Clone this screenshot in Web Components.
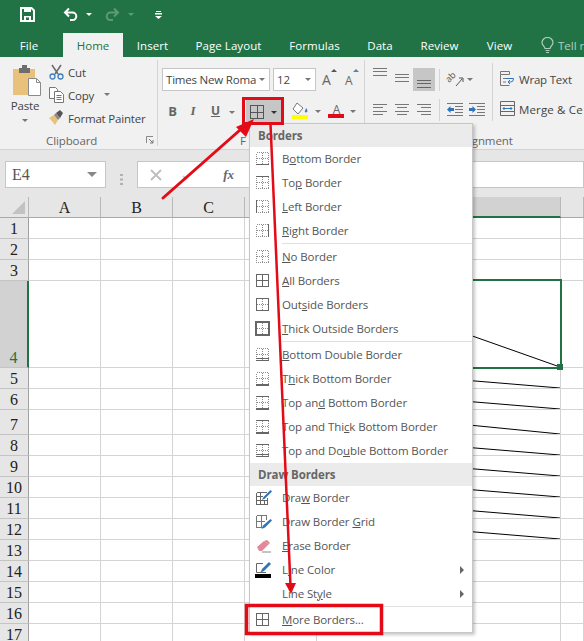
<!DOCTYPE html>
<html><head><meta charset="utf-8"><title>Excel borders</title>
<style>
html,body{margin:0;padding:0;background:#fff}
body{width:584px;height:641px;overflow:hidden;position:relative;font:11.5px "Open Sans",sans-serif;color:#444}
</style></head><body>
<x-titlebar></x-titlebar>
<x-tabbar></x-tabbar>
<x-ribbon>
  <x-clipboard-group></x-clipboard-group>
  <x-font-group></x-font-group>
  <x-alignment-group></x-alignment-group>
</x-ribbon>
<x-formula-bar></x-formula-bar>
<x-sheet></x-sheet>
<x-border-menu></x-border-menu>
<x-annotations></x-annotations>
<script>
function define(name, html, mixin){
  const t=document.createElement('template');t.innerHTML=html;
  customElements.define(name,class extends HTMLElement{
    constructor(){super();const r=this.attachShadow({mode:'open'});r.appendChild(t.content.cloneNode(true));if(mixin)mixin.call(this,r);}
  });
}
const FONT='"Open Sans",sans-serif';
const TXT=`font:11.5px ${FONT};letter-spacing:-.2px;`;

define('x-caret',`<style>:host{display:inline-block;flex:none;width:0;height:0;border-left:3px solid transparent;border-right:3px solid transparent;border-top:3px solid currentColor;color:#777}</style>`);

define('x-titlebar',`<style>
:host{display:flex;align-items:center;height:33px;background:#217346;color:#fff;box-sizing:border-box;padding:0 0 4px 20px}
svg{display:block}
x-caret{color:#fff;margin-left:8px}
.dim{color:#5d9a78}
</style>
<svg width="15" height="15" viewBox="0 0 15 15"><path d="M1 1h10.5L14 3.500V14H1z" fill="none" stroke="#fff" stroke-width="2"/><rect x="4" y="1" width="7" height="4" fill="#fff"/><rect x="4" y="9" width="7" height="5" fill="#fff"/><rect x="6" y="10.500" width="3" height="2.500" fill="#217346"/></svg>
<svg style="margin-left:28px" width="15" height="15" viewBox="0 0 15 15"><path d="M6 1.500L2 5.500l4 4M2 5.500h7.500a3.800 3.800 0 0 1 0 7.600H7" fill="none" stroke="#fff" stroke-width="2"/></svg>
<x-caret style="margin-left:8px"></x-caret>
<svg style="margin-left:13px" width="15" height="15" viewBox="0 0 15 15"><path d="M9 1.500l4 4-4 4M13 5.500H5.500a3.800 3.800 0 0 0 0 7.600H8" fill="none" stroke="#5d9a78" stroke-width="2"/></svg>
<x-caret class="dim" style="margin-left:8px"></x-caret>
<svg style="margin-left:21px" width="7" height="8" viewBox="0 0 7 8"><rect x="1" y="0" width="5" height="1" fill="#fff"/><rect x="0" y="2" width="7" height="1.500" fill="#fff"/><path d="M0 5h7L3.500 8z" fill="#fff"/></svg>
`);

define('x-tab',`<style>
:host{display:flex;align-items:center;justify-content:center;height:24px;box-sizing:border-box;color:#fff;font:11.5px ${FONT};letter-spacing:.05px;white-space:nowrap}
:host([active]){background:#f1f1f1;color:#217346}
</style><slot></slot>`);

define('x-tabbar',`<style>
:host{display:flex;height:24px;background:#217346;overflow:hidden}
x-tab{flex:none}
.tell{opacity:.8;display:flex;align-items:center;gap:4px;color:#d4e5db;font:11.5px ${FONT};margin-left:29px;white-space:nowrap}
</style>
<x-tab style="width:63px;padding-right:5px">File</x-tab>
<x-tab active style="width:60px">Home</x-tab>
<x-tab style="width:29px;margin-left:15px">Insert</x-tab>
<x-tab style="width:65px;margin-left:29px">Page Layout</x-tab>
<x-tab style="width:49px;margin-left:29px">Formulas</x-tab>
<x-tab style="width:24px;margin-left:29px">Data</x-tab>
<x-tab style="width:37px;margin-left:29px">Review</x-tab>
<x-tab style="width:25px;margin-left:29px">View</x-tab>
<div class="tell"><svg width="13" height="16" viewBox="0 0 13 16"><path d="M4 11.500C3.500 9 1 8.500 1 5.500a5.500 5 0 0 1 11 0c0 3-2.500 3.500-3 6zM4.500 13.500h4M5 15.500h3" fill="none" stroke="#d4e5db" stroke-width="1.200"/></svg><span>Tell r</span></div>
`);

define('x-ribbon',`<style>
:host{display:flex;height:92px;background:#f1f1f1;border-bottom:1px solid #d2d2d2;box-sizing:content-box;overflow:hidden}
</style><slot></slot>`);

define('x-group-label',`<style>
:host{display:block;height:14px;font:11.5px/14px ${FONT};color:#666;white-space:nowrap;margin-top:auto;letter-spacing:-.1px}
</style><slot></slot>`);

define('x-small-btn',`<style>
:host{display:flex;align-items:center;height:23px;${TXT}color:#444;white-space:nowrap}
.i{width:19px;flex:none;display:flex}
.t{padding-top:1px}
</style><div class="i"><slot name="icon"></slot></div><div class="t"><slot></slot></div><slot name="after"></slot>`);

define('x-clipboard-group',`<style>
:host{display:flex;flex-direction:column;flex:none;width:158px;box-sizing:border-box;height:86px;margin-top:3px;border-right:1px solid #d4d4d4;position:relative}
.body{display:flex;height:74px}
.paste{width:49px;flex:none;display:flex;flex-direction:column;${TXT}color:#444}
.paste svg{display:block;margin:5px 0 0 13px}
.paste span{display:block;text-align:center;width:50px;line-height:14px;margin-top:3px}
.paste x-caret{margin:6px 0 0 22px}
.foot{display:flex;align-items:center;height:12px;margin-top:auto}
x-group-label{margin-left:46px;width:100px}
svg{display:block}
</style>
<div class="body">
 <div class="paste">
  <svg width="29" height="31" viewBox="0 0 29 31"><path d="M0 4h22v26H0z" fill="#e8c27a"/><path d="M6 3h3V0h5v3h3v5H6z" fill="#6e6e6e"/><path d="M15.500 13.500h8l4 4v13h-12z" fill="#fff" stroke="#8a8a8a"/><path d="M23.500 13.500v4h4" fill="none" stroke="#8a8a8a"/></svg>
  <span>Paste</span><x-caret></x-caret>
 </div>
 <div class="small">
  <x-small-btn><svg slot="icon" width="15" height="16" viewBox="0 0 15 16"><path d="M3 1l6 9M12 1L6 10" stroke="#6e6e6e" stroke-width="1.600" fill="none"/><circle cx="3.500" cy="12.500" r="2.500" fill="none" stroke="#3f7fbf" stroke-width="1.300"/><circle cx="11.500" cy="12.500" r="2.500" fill="none" stroke="#3f7fbf" stroke-width="1.300"/></svg>Cut</x-small-btn>
  <x-small-btn><svg slot="icon" width="15" height="16" viewBox="0 0 15 16"><path d="M.5.500h6l2 2v9H.5z" fill="#fff" stroke="#777"/><path d="M5.500 4.500h6l3 3v8h-9z" fill="#fff" stroke="#777"/><path d="M7.500 8.500h5M7.500 10.500h5M7.500 12.500h5" stroke="#777"/></svg>Copy<x-caret slot="after" style="margin-left:10px"></x-caret></x-small-btn>
  <x-small-btn><svg slot="icon" width="16" height="15" viewBox="0 0 16 15"><path d="M0 8l5-3 4 5-3 5C4 12 2 10 0 8z" fill="#e8c27a"/><path d="M5 5l4 5 2-2-4-5z" fill="#8a8a8a"/><path d="M7 3l4-3 3 3-3 5z" fill="#555"/></svg>Format Painter</x-small-btn>
 </div>
</div>
<div class="foot"><x-group-label>Clipboard</x-group-label>
<svg width="8" height="8" viewBox="0 0 8 8"><path d="M.5 7V.5H7" fill="none" stroke="#888"/><path d="M3 3l4 4M7 4v3H4" fill="none" stroke="#777"/></svg></div>
`);

define('x-combo',`<style>
:host{display:flex;align-items:center;justify-content:space-between;height:23px;box-sizing:border-box;background:#fff;border:1px solid #c6c6c6;padding:0 4px 0 3px;${TXT}color:#444;white-space:nowrap;overflow:hidden}
</style><slot></slot><x-caret></x-caret>`);

define('x-font-group',`<style>
:host{display:flex;flex-direction:column;flex:none;width:207px;box-sizing:border-box;height:86px;margin-top:3px;border-right:1px solid #d4d4d4;padding:8px 0 0 4px}
.row{display:flex;align-items:center}
.r2{height:24px;margin-top:9px;color:#666;font:12px ${FONT}}
.b{display:block;flex:none;text-align:center;margin-top:-3px}
.big{font:14px ${FONT};color:#666;position:relative}
.tri{position:absolute;width:0;height:0;border-left:3px solid transparent;border-right:3px solid transparent;border-bottom:3px solid #555}
.border{flex:none;width:35px;height:24px;background:#c6c6c6;display:flex;align-items:center;padding-left:4px;box-sizing:border-box;color:#444}
svg{display:block}
x-group-label{height:11px;line-height:11px}
</style>
<div class="row">
 <x-combo style="width:108px">Times New Roma</x-combo>
 <x-combo style="width:43px;margin-left:3px">12</x-combo>
 <span class="big" style="margin-left:6px;width:14px">A<i class="tri" style="left:9px;top:-1px"></i></span>
 <span class="big" style="margin-left:9px;width:12px;font-size:12px;top:1px">A<i class="tri" style="left:8px;top:-3px;border-bottom-color:#4a86c0"></i></span>
</div>
<div class="row r2">
 <b class="b" style="margin-left:5px;width:11px;font-size:13px">B</b>
 <i class="b" style="margin-left:11px;width:8px;font:italic bold 13px 'Liberation Serif',serif">I</i>
 <u class="b" style="margin-left:13px;width:11px;font-weight:700;font-size:12px">U</u>
 <x-caret style="margin-left:8px"></x-caret>
 <div class="border" style="margin-left:11px">
  <svg width="14" height="14" viewBox="0 0 14 14"><path d="M.5.500h13v13H.500zM7 .500v13M.5 7h13" fill="none" stroke="#555" shape-rendering="crispEdges"/></svg>
  <x-caret style="margin-left:7px;color:#333"></x-caret>
 </div>
 <div style="margin-left:11px;width:17px;flex:none;margin-top:-4px">
  <svg width="17" height="17" viewBox="0 0 17 17"><path d="M5 1l6 5-5 6-5-5z" fill="#fff" stroke="#777"/><path d="M14 6c1.500 2 2 3 1 4s-3 0-2-1z" fill="#3f7fbf"/><rect y="13" width="16" height="4" fill="#ffff00"/></svg>
 </div>
 <x-caret style="margin-left:6px;margin-top:-2px"></x-caret>
 <div style="margin-left:7px;width:17px;flex:none;position:relative;height:18px;margin-top:-4px;text-align:center;font:700 14px/14px ${FONT};color:#666">A<div style="position:absolute;left:0;bottom:1px;width:16px;height:4px;background:#e00c1a"></div></div>
 <x-caret style="margin-left:5px;margin-top:-2px"></x-caret>
</div>
<x-group-label style="margin-left:78px">F</x-group-label>
`);

define('x-tbtn',`<style>
:host{display:flex;align-items:center;justify-content:center;width:22px;height:23px;flex:none}
:host([pressed]){background:#c6c6c6}
</style><slot></slot>`);

define('x-alignment-group',`<style>
:host{display:flex;flex-direction:column;flex:none;width:220px;height:86px;margin-top:3px;position:relative}
.main{display:flex;padding-top:5px}
.left{width:127px;flex:none;box-sizing:border-box;padding:3px 0 0 4px;display:flex;flex-direction:column;gap:7px}
.row{display:flex;align-items:center;height:23px}
.sep{width:1px;height:22px;background:#d4d4d4;margin:0 7px 0 4px;flex:none}
.right{border-left:1px solid #d4d4d4;padding:4px 0 0 7px;height:54px;flex:none;${TXT}color:#444;display:flex;flex-direction:column;gap:7px;margin-top:-2px}
.right .row{gap:4px;white-space:nowrap}
.right span{padding-top:2px}
svg{display:block;flex:none}
x-group-label{margin-left:94px;height:10px;line-height:10px}
</style>
<div class="main">
<div class="left">
 <div class="row">
  <x-tbtn><svg width="14" height="9" viewBox="0 0 14 9" style="margin-top:-14px"><path d="M0 .5h14M0 3.500h14M0 7.500h14" stroke="#777" shape-rendering="crispEdges"/></svg></x-tbtn>
  <x-tbtn><svg width="14" height="9" viewBox="0 0 14 9" style="margin-top:-2px"><path d="M0 .5h14M0 3.500h14M0 7.500h14" stroke="#777" shape-rendering="crispEdges"/></svg></x-tbtn>
  <x-tbtn pressed><svg width="14" height="9" viewBox="0 0 14 9" style="margin-top:10px"><path d="M0 .5h14M0 3.500h14M0 7.500h14" stroke="#666" shape-rendering="crispEdges"/></svg></x-tbtn>
  <div class="sep"></div>
  <svg width="17" height="16" viewBox="0 0 17 16" style="overflow:visible"><text x="2" y="11" transform="rotate(-45 2 11)" font-family="Open Sans" font-size="9" fill="#555">ab</text><path d="M9 14l6-7M12 6h4v4" fill="none" stroke="#555"/></svg>
  <x-caret style="margin-left:3px"></x-caret>
 </div>
 <div class="row">
  <x-tbtn><svg width="14" height="11" viewBox="0 0 14 11"><path d="M0 .5h14M0 3.500h10M0 7.500h14M0 10.500h10" stroke="#777" shape-rendering="crispEdges"/></svg></x-tbtn>
  <x-tbtn><svg width="14" height="11" viewBox="0 0 14 11"><path d="M0 .5h14M2 3.500h10M0 7.500h14M2 10.500h10" stroke="#777" shape-rendering="crispEdges"/></svg></x-tbtn>
  <x-tbtn><svg width="14" height="11" viewBox="0 0 14 11"><path d="M0 .5h14M4 3.500h10M0 7.500h14M4 10.500h10" stroke="#777" shape-rendering="crispEdges"/></svg></x-tbtn>
  <div class="sep"></div>
  <svg width="16" height="13" viewBox="0 0 16 13"><path d="M0 .5h16M8 3.500h8M8 6.500h8M8 9.500h8M0 12.500h16" stroke="#777" shape-rendering="crispEdges"/><path d="M0 6.500l3.500-3.500v2H7v3H3.500v2z" fill="#2f75b5"/></svg>
  <svg style="margin-left:6px" width="16" height="13" viewBox="0 0 16 13"><path d="M0 .5h16M8 3.500h8M8 6.500h8M8 9.500h8M0 12.500h16" stroke="#777" shape-rendering="crispEdges"/><path d="M7 6.500L3.500 3v2H0v3h3.500v2z" fill="#2f75b5"/></svg>
 </div>
</div>
<div class="right">
 <div class="row"><svg width="15" height="15" viewBox="0 0 15 15"><path d="M.5.500h9v3h-9zM.5 3.500v11h9M3 7.500h5M3 11h3" fill="none" stroke="#777"/><path d="M6 7.500h7.500V8a3 3 0 0 1-3 3H8M10 9l-2 2 2 2" fill="none" stroke="#2f75b5"/></svg><span>Wrap Text</span></div>
 <div class="row"><svg width="15" height="15" viewBox="0 0 15 15"><path d="M.5.500h14v14H.500zM.5 4.500h14M.5 10.500h14" fill="none" stroke="#666"/><path d="M3 7.500h9M4.500 6L3 7.500 4.500 9M10.500 6L12 7.500 10.500 9" fill="none" stroke="#2f75b5"/></svg><span style="letter-spacing:.15px">Merge &amp; Ce</span></div>
</div>
</div>
<x-group-label>Alignment</x-group-label>
`);

define('x-formula-bar',`<style>
:host{display:flex;height:47px;box-sizing:border-box;background:#e6e6e6;padding:11px 0 0 5px}
.box{height:27px;box-sizing:border-box;background:#fff;border:1px solid #c6c6c6;display:flex;align-items:center}
.name{width:101px;padding:0 6px 0 6px;justify-content:space-between;font:16px "Liberation Serif",serif;color:#555}
.dots{width:31px;display:flex;justify-content:center;align-items:center;flex:none}
.fx{width:110px;flex:none;border-right:0;padding-left:12px;box-sizing:border-box}
.rest{flex:1;border-left:0;margin-left:0}
i{font:italic 700 13px "Liberation Serif",serif;color:#666;margin-left:auto;margin-right:13px}
svg{display:block}
x-caret{border-left-width:5px;border-right-width:5px;border-top-width:5px;color:#888;margin-right:2px}
</style>
<div class="box name">E4<x-caret></x-caret></div>
<div class="dots"><svg width="3" height="11" viewBox="0 0 3 11"><path d="M0 0h3v2H0zM0 4.500h3v2H0zM0 9h3v2H0z" fill="#b0b0b0"/></svg></div>
<div class="box fx"><svg width="12" height="12" viewBox="0 0 12 12"><path d="M1 1l10 10M11 1L1 11" stroke="#bdbdbd" stroke-width="1.800"/></svg><svg style="margin-left:20px" width="12" height="12" viewBox="0 0 12 12"><path d="M1 7l3 3 7-8" fill="none" stroke="#cfcfcf" stroke-width="1.800"/></svg><i>fx</i></div>
<div class="box rest"></div>
`);

define('x-sheet',`<style>
:host{display:block;height:444px;overflow:hidden;background:#fff}
.g{display:grid;grid-template-columns:29px 72px 72px 72px 72px 244px 23px;grid-template-rows:21px 21px 21px 21px 87px 21px 21px 25px repeat(10,21px);font:16px "Liberation Serif",serif;color:#222}
.g>div{box-sizing:border-box;border-right:1px solid #d4d4d4;border-bottom:1px solid #d4d4d4;position:relative}
.h{background:#e6e6e6;display:flex;align-items:center;justify-content:center}
.g>.col{border-bottom:1px solid #a8a8a8;border-right:1px solid #b8b8b8;padding-top:2px}
.g>.row{border-right:1px solid #a0a0a0;border-bottom:1px solid #c4c4c4;align-items:flex-end;line-height:18px}
.g>.sel{background:#d2d2d2;color:#217346}
.g>.col.sel{border-bottom:2px solid #217346}
.g>.row.sel{border-right:2px solid #217346}
.corner{position:absolute;right:3px;bottom:3px;width:0;height:0;border-left:13px solid transparent;border-bottom:13px solid #c2c2c2}
svg.d{position:absolute;left:0;top:0;width:100%;height:100%;display:block}
.box{position:absolute;left:-1px;top:-2px;right:-2px;bottom:-2px;border:2px solid #217346;z-index:2}
.hd{position:absolute;right:-3px;bottom:-3px;width:6px;height:6px;background:#217346}
</style><div class="g"></div>`,function(r){
  const g=r.querySelector('.g');let h='';
  h+='<div class="h col"><span class="corner"></span></div>';
  ['A','B','C','','',''].forEach((c,i)=>{h+=`<div class="h col${i===4?' sel':''}">${c}</div>`;});
  for(let i=1;i<=17;i++){
    h+=`<div class="h row${i===4?' sel':''}">${i}</div>`;
    for(let c=0;c<6;c++){
      let inner='';
      if(c===4&&i>=4&&i<=12)inner='<svg class="d" viewBox="0 0 100 100" preserveAspectRatio="none"><path d="M0 0L100 100" stroke="#000" stroke-width="1" vector-effect="non-scaling-stroke" fill="none"/></svg>';
      if(c===4&&i===4)inner+='<div class="box"><div class="hd"></div></div>';
      h+=`<div>${inner}</div>`;
    }
  }
  g.innerHTML=h;
});

define('x-border-icon',`<style>:host{display:block;width:14px;height:14px}svg{display:block;overflow:visible}</style><svg width="14" height="14" viewBox="0 0 14 14" shape-rendering="crispEdges"></svg>`,function(r){
  const t=this.getAttribute('type')||'none';
  const solid=(d,w=1)=>`<path d="${d}" stroke="#666" stroke-width="${w}" fill="none"/>`;
  let s='';
  const dots='<path d="M.5.500h12v12H.500zM6.500.500v12M.5 6.500h12" fill="none" stroke="#8c8c8c" stroke-dasharray="1 1"/>';
  if(t!=='all')s+=dots;
  const T=solid('M0 .5h13'),B=solid('M0 12.500h13'),L=solid('M.5 0v13'),R=solid('M12.500 0v13');
  const map={bottom:B,top:T,left:L,right:R,none:'',
    all:solid('M.5.500h12v12H.500zM6.500.500v12M.5 6.500h12'),
    outside:solid('M.5.500h12v12H.500z'),
    thick:solid('M0 0h13v13H0z',2),
    bdouble:solid('M0 10.500h13M0 12.500h13'),
    tbottom:solid('M0 13h13',2),
    topbottom:T+solid('M0 13h13',2),
    toptbottom:T+solid('M0 13h13',2),
    topdouble:T+solid('M0 10.500h13M0 12.500h13')};
  r.querySelector('svg').innerHTML=s+(map[t]||'');
});

define('x-menu-item',`<style>
:host{display:flex;align-items:center;height:24px;${TXT}letter-spacing:-.1px;color:#555;white-space:nowrap}
.i{width:32px;flex:none;padding-left:6px;box-sizing:border-box;display:flex;align-items:center;height:24px}
.t{flex:1;padding-bottom:2px}
.arrow{width:0;height:0;border-left:4px solid #666;border-top:4px solid transparent;border-bottom:4px solid transparent;margin-right:8px;display:none}
:host([sub]) .arrow{display:block}
</style><div class="i"><slot name="icon"></slot></div><div class="t"><slot></slot></div><div class="arrow"></div>`);

define('x-menu-head',`<style>
:host{display:flex;align-items:center;height:23px;background:#ebebeb;font:700 11.5px ${FONT};letter-spacing:-.1px;color:#666;padding-left:8px}
</style><slot></slot>`);
define('x-menu-sep',`<style>:host{display:block;height:2px;box-sizing:border-box;border-top:1px solid #e0e0e0;margin-left:32px}</style>`);

define('x-border-menu',`<style>
:host{position:absolute;left:249px;top:123px;width:224px;box-sizing:border-box;background:#fff;border:1px solid #c6c6c6;box-shadow:2px 2px 3px rgba(0,0,0,.22);z-index:5}
svg{display:block}
</style>
<x-menu-head>Borders</x-menu-head>
<x-menu-item><x-border-icon slot="icon" type="bottom"></x-border-icon>B<u>o</u>ttom Border</x-menu-item>
<x-menu-item><x-border-icon slot="icon" type="top"></x-border-icon>To<u>p</u> Border</x-menu-item>
<x-menu-item><x-border-icon slot="icon" type="left"></x-border-icon><u>L</u>eft Border</x-menu-item>
<x-menu-item><x-border-icon slot="icon" type="right"></x-border-icon><u>R</u>ight Border</x-menu-item>
<x-menu-sep></x-menu-sep>
<x-menu-item><x-border-icon slot="icon" type="none"></x-border-icon><u>N</u>o Border</x-menu-item>
<x-menu-item><x-border-icon slot="icon" type="all"></x-border-icon><u>A</u>ll Borders</x-menu-item>
<x-menu-item><x-border-icon slot="icon" type="outside"></x-border-icon>Out<u>s</u>ide Borders</x-menu-item>
<x-menu-item><x-border-icon slot="icon" type="thick"></x-border-icon><u>T</u>hick Outside Borders</x-menu-item>
<x-menu-sep></x-menu-sep>
<x-menu-item><x-border-icon slot="icon" type="bdouble"></x-border-icon><u>B</u>ottom Double Border</x-menu-item>
<x-menu-item><x-border-icon slot="icon" type="tbottom"></x-border-icon>T<u>h</u>ick Bottom Border</x-menu-item>
<x-menu-item><x-border-icon slot="icon" type="topbottom"></x-border-icon>Top an<u>d</u> Bottom Border</x-menu-item>
<x-menu-item><x-border-icon slot="icon" type="toptbottom"></x-border-icon>Top and Thi<u>c</u>k Bottom Border</x-menu-item>
<x-menu-item><x-border-icon slot="icon" type="topdouble"></x-border-icon>Top and Do<u>u</u>ble Bottom Border</x-menu-item>
<x-menu-head>Draw Borders</x-menu-head>
<x-menu-item><svg slot="icon" width="16" height="16" viewBox="0 0 16 16"><path d="M.5 2.500h10M.5 2.500v12h11V8M.5 6.500h6M.5 10.500h11M4.500 2.500v12M8 10v4.500" fill="none" stroke="#666" shape-rendering="crispEdges"/><path d="M14.500 0l1.500 1.500-7 7-3 1.500 1.500-3z" fill="#2f75b5"/></svg>Dra<u>w</u> Border</x-menu-item>
<x-menu-item><svg slot="icon" width="16" height="16" viewBox="0 0 16 16"><path d="M.5 1.500h10v4M.5 1.500v12h6M.5 7.500h8M5.500 1.500v12" fill="none" stroke="#777" shape-rendering="crispEdges"/><path d="M14.500 5l1.500 1.500-7 7-3.500 1.500 1.500-3.500z" fill="#2f75b5"/></svg>Draw Border <u>G</u>rid</x-menu-item>
<x-menu-item><svg slot="icon" width="16" height="14" viewBox="0 0 16 14"><path d="M1 8l7-6 5 3-7 7H3z" fill="#e08a9a"/><path d="M8 2l3-1 3 3-1 1z" fill="#d88"/><path d="M6 13h9" stroke="#888"/></svg><u>E</u>rase Border</x-menu-item>
<x-menu-item sub><svg slot="icon" width="16" height="16" viewBox="0 0 16 16" style="margin-left:-1px"><path d="M8 1.500H1.500v9H11" fill="none" stroke="#666"/><path d="M14 0l2 2-7 7-3.500 1.500L7 7z" fill="#2f75b5"/><rect y="12" width="16" height="4" fill="#000"/></svg>L<u>i</u>ne Color</x-menu-item>
<x-menu-item sub>Line St<u>y</u>le</x-menu-item>
<x-menu-sep></x-menu-sep>
<x-menu-item><x-border-icon slot="icon" type="all"></x-border-icon><u>M</u>ore Borders...</x-menu-item>
`);

define('x-annotations',`<style>
:host{position:absolute;left:0;top:0;width:584px;height:641px;z-index:9;pointer-events:none}
svg{display:block}
</style>
<svg width="584" height="641" viewBox="0 0 584 641" fill="none" stroke="#e30b17">
 <rect x="243.500" y="98.500" width="39" height="25" stroke-width="3"/>
 <path d="M163 198L240 130" stroke-width="3" stroke-linecap="round"/>
 <path d="M254 119L236 127L246 137Z" fill="#e30b17" stroke="none"/>
 <path d="M270.500 124L290.500 586" stroke-width="2.500"/>
 <path d="M291 594L285 583L296 583Z" fill="#e30b17" stroke="none"/>
 <rect x="246.500" y="605.500" width="135" height="28" stroke-width="3.500"/>
</svg>`);
</script>
</body></html>
